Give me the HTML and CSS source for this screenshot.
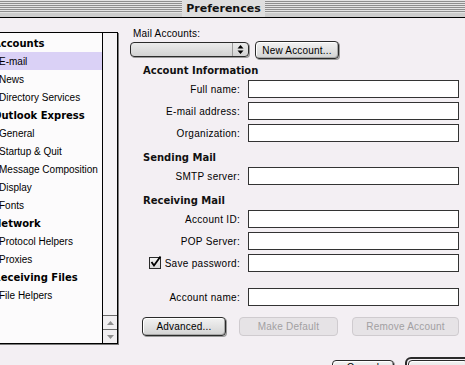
FILE: index.html
```html
<!DOCTYPE html>
<html lang="en">
<head>
    <meta charset="UTF-8">
    <title>Preferences</title>
    <link rel="stylesheet" href="styles.css">
</head>
<body>
    <div class="window">
        <div class="titlebar"><span class="title">Preferences</span></div>

        <div class="content">
            <div class="listbox">
                <ul class="list">
                    <li class="group">Accounts</li>
                    <li class="item selected">E-mail</li>
                    <li class="item">News</li>
                    <li class="item">Directory Services</li>
                    <li class="group">Outlook Express</li>
                    <li class="item">General</li>
                    <li class="item">Startup &amp; Quit</li>
                    <li class="item">Message Composition</li>
                    <li class="item">Display</li>
                    <li class="item">Fonts</li>
                    <li class="group">Network</li>
                    <li class="item">Protocol Helpers</li>
                    <li class="item">Proxies</li>
                    <li class="group">Receiving Files</li>
                    <li class="item">File Helpers</li>
                </ul>
                <div class="scrollbar">
                    <div class="track"></div>
                    <div class="arrow"><svg width="7" height="4" viewBox="0 0 7 4"><path d="M3.5 0 L7 4 L0 4 Z" fill="#8e8e8e"/></svg></div>
                    <div class="arrow"><svg width="7" height="4" viewBox="0 0 7 4"><path d="M0 0 L7 0 L3.5 4 Z" fill="#8e8e8e"/></svg></div>
                </div>
            </div>

            <div class="panel">
                <div class="caption">Mail Accounts:</div>
                <div class="account-row">
                    <div class="popup">
                        <span class="popup-value"></span>
                        <span class="popup-arrows">
                            <svg width="7" height="9" viewBox="0 0 7 9"><path d="M3.5 0 L6.5 3.5 L0.5 3.5 Z M0.5 5.5 L6.5 5.5 L3.5 9 Z" fill="#000"/></svg>
                        </span>
                    </div>
                    <button class="btn new-account">New Account...</button>
                </div>

                <div class="section">Account Information</div>
                <div class="fields">
                    <label class="field-label">Full name:</label><div class="input"></div>
                    <label class="field-label">E-mail address:</label><div class="input"></div>
                    <label class="field-label">Organization:</label><div class="input"></div>
                </div>

                <div class="section spaced">Sending Mail</div>
                <div class="fields">
                    <label class="field-label">SMTP server:</label><div class="input"></div>
                </div>

                <div class="section spaced">Receiving Mail</div>
                <div class="fields">
                    <label class="field-label">Account ID:</label><div class="input"></div>
                    <label class="field-label">POP Server:</label><div class="input"></div>
                    <label class="field-label">
                        <span class="checkbox">
                            <svg width="13" height="13" viewBox="0 0 13 13"><path d="M2.5 6 L5 9.5 L11.5 0.5" fill="none" stroke="#000" stroke-width="1.8"/></svg>
                        </span>Save password:
                    </label><div class="input"></div>
                </div>

                <div class="fields account-name">
                    <label class="field-label">Account name:</label><div class="input"></div>
                </div>

                <div class="actions">
                    <button class="btn advanced">Advanced...</button>
                    <button class="btn make-default" disabled>Make Default</button>
                    <button class="btn remove" disabled>Remove Account</button>
                </div>

                <div class="dialog-buttons">
                    <button class="btn cancel">Cancel</button>
                    <div class="default-ring"><button class="btn ok">OK</button></div>
                </div>
            </div>
        </div>
    </div>
</body>
</html>
```

FILE: styles.css
```css
:root {
    --window: #f3eff3;
    --line: #2a2a2a;
    --select: #dad1f6;
    --disabled: #a2a0a2;
}

* {
    margin: 0;
    padding: 0;
    box-sizing: border-box;
}

body {
    background: var(--window);
    font-family: 'Liberation Sans', Arial, sans-serif;
    font-size: 10px;
    color: #000;
    width: 465px;
    height: 365px;
    overflow: hidden;
}

.titlebar {
    height: 18px;
    border-bottom: 1px solid #000;
    background:
        repeating-linear-gradient(to bottom, #e4e4e4 0 1px, #8e8e8e 1px 2px) top / 100% 13px no-repeat,
        #cdcdcd;
    display: flex;
    justify-content: center;
    padding-right: 18px;
}

.title {
    background: #dedede;
    font-family: 'DejaVu Sans', sans-serif;
    font-weight: bold;
    font-size: 11px;
    line-height: 17px;
    padding: 0 4px;
    color: #111;
}

.content {
    display: flex;
}

/* sidebar list */
.listbox {
    margin-left: -10px;
    margin-top: 14px;
    width: 128px;
    height: 312px;
    flex-shrink: 0;
    border: 1px solid #000;
    box-shadow: 1px 1px 0 #7a7a7a;
    display: flex;
    background: #fcfbfc;
}

.list {
    list-style: none;
    flex: 1;
    padding-top: 1px;
}

.list li {
    height: 18px;
    line-height: 19px;
    white-space: nowrap;
    overflow: hidden;
}

.group {
    font-family: 'DejaVu Sans', sans-serif;
    font-weight: bold;
    padding-left: 2px;
}

.item {
    padding-left: 8px;
}

.item.selected {
    background: var(--select);
}

.scrollbar {
    width: 15px;
    border-left: 1px solid #000;
    display: flex;
    flex-direction: column;
    background: #f5f3f5;
}

.track {
    flex: 1;
}

.arrow {
    height: 14px;
    border-top: 1px solid #6a6a6a;
    display: flex;
    align-items: center;
    justify-content: center;
    background: #f1eff1;
}

/* right panel */
.panel {
    margin-left: 12px;
    padding-top: 10px;
    width: 345px;
    flex-shrink: 0;
    display: flex;
    flex-direction: column;
}

.caption {
    line-height: 12px;
    padding-left: 3px;
    letter-spacing: 0.2px;
}

.account-row {
    display: flex;
    align-items: flex-start;
    height: 18px;
    margin-top: 1px;
}

.popup {
    width: 119px;
    height: 15px;
    margin-top: 1px;
    border: 1px solid var(--line);
    border-radius: 4px;
    background: linear-gradient(#ebebeb, #d2d2d2);
    box-shadow: 1px 1px 0 #9a9a9a;
    display: flex;
}

.popup-value {
    flex: 1;
}

.popup-arrows {
    width: 16px;
    border-left: 1px solid #9a9a9a;
    display: flex;
    align-items: center;
    justify-content: center;
}

.btn {
    font-family: 'Liberation Sans', Arial, sans-serif;
    font-size: 10px;
    letter-spacing: 0.2px;
    color: #000;
    height: 19px;
    flex-shrink: 0;
    border: 1px solid var(--line);
    border-radius: 4px;
    background: linear-gradient(#f2f2f2, #d3d3d3);
    box-shadow: inset 1px 1px 0 #fff, inset -1px -1px 0 #a8a8a8, 1px 1px 0 #9a9a9a;
}

.btn:disabled {
    color: var(--disabled);
    border-color: #cfcbcf;
    background: #e6e3e6;
    box-shadow: none;
}

.new-account {
    margin-left: 6px;
    width: 84px;
    height: 18px;
}

.section {
    font-family: 'DejaVu Sans', sans-serif;
    font-weight: bold;
    line-height: 12px;
    padding-left: 13px;
    margin-top: 6px;
    color: #111;
}

.section.spaced {
    margin-top: 8px;
}

.fields {
    display: grid;
    grid-template-columns: 110px 211px;
    grid-auto-rows: 22px;
    column-gap: 8px;
    align-items: center;
    margin-top: 1px;
}

.fields.account-name {
    margin-top: 12px;
}

.field-label {
    text-align: right;
    letter-spacing: 0.3px;
    display: flex;
    align-items: center;
    justify-content: flex-end;
    white-space: nowrap;
}

.input {
    height: 18px;
    background: #fff;
    border: 1px solid #333;
}

.checkbox {
    width: 12px;
    height: 12px;
    border: 1px solid var(--line);
    background: linear-gradient(#f4f4f4, #d8d8d8);
    margin-right: 4px;
    position: relative;
}

.checkbox svg {
    position: absolute;
    left: -1px;
    top: -2px;
}

.actions {
    display: flex;
    margin-top: 9px;
    padding-left: 12px;
}

.advanced {
    width: 84px;
}

.make-default {
    width: 99px;
    margin-left: 13px;
}

.remove {
    width: 107px;
    margin-left: 14px;
}

.dialog-buttons {
    display: flex;
    align-items: flex-start;
    margin-top: 21px;
    padding-left: 202px;
}

.cancel {
    width: 62px;
    margin-top: 3px;
    line-height: 12px;
    padding-bottom: 4px;
}

.default-ring {
    flex-shrink: 0;
    margin-left: 11px;
    border: 2px solid var(--line);
    border-radius: 6px;
    padding: 1px;
}

.ok {
    width: 60px;
}
```
